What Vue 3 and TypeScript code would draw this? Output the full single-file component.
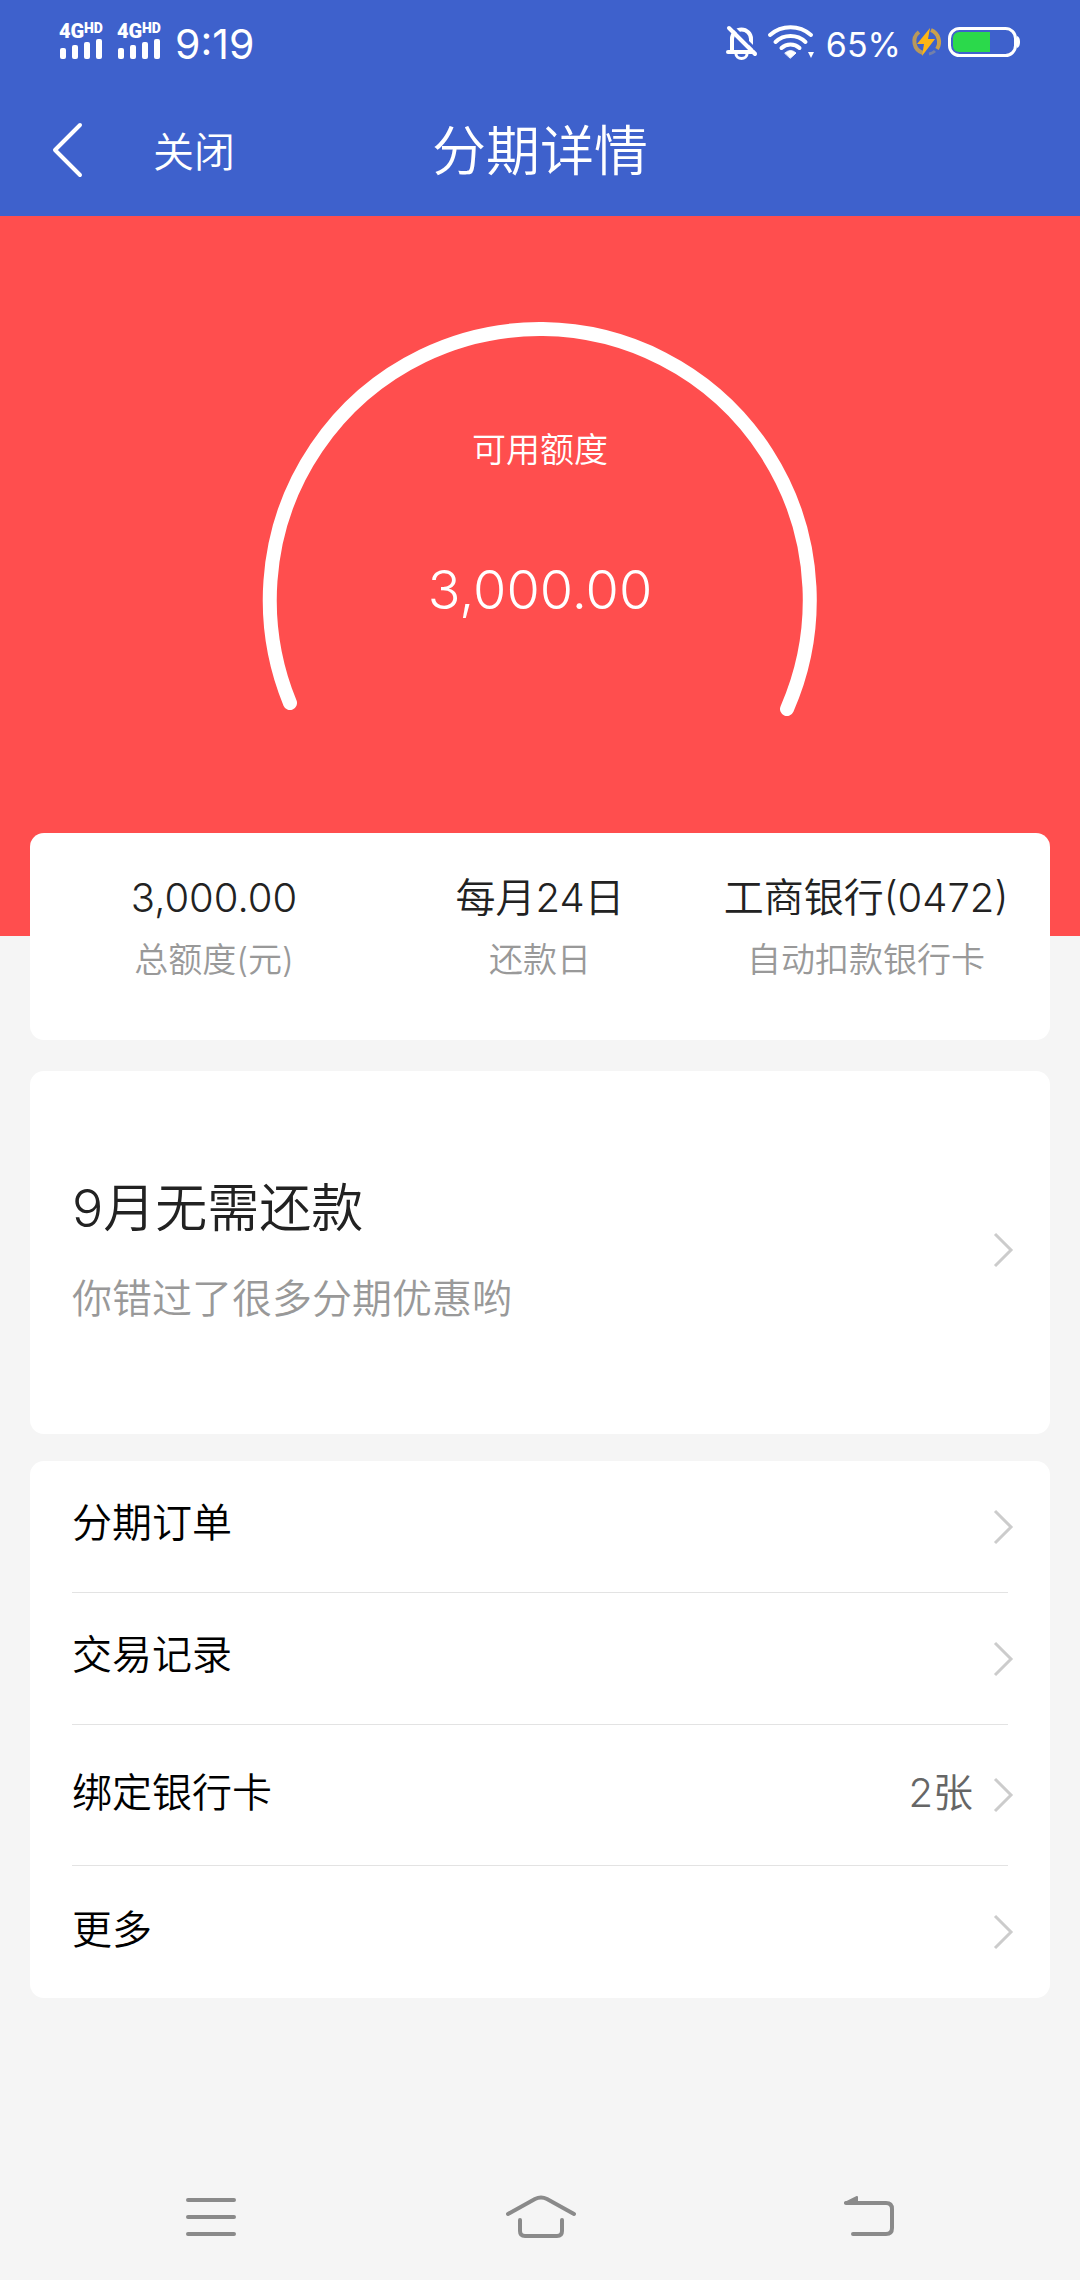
<script setup lang="ts">
interface Stat {
  value: string
  label: string
}

interface MenuRow {
  label: string
  note?: string
}

const signals: number[] = [1, 2]

const stats: Stat[] = [
  { value: '3,000.00', label: '总额度(元)' },
  { value: '每月24日', label: '还款日' },
  { value: '工商银行(0472)', label: '自动扣款银行卡' },
]

const rows: MenuRow[] = [
  { label: '分期订单' },
  { label: '交易记录' },
  { label: '绑定银行卡', note: '2张' },
  { label: '更多' },
]
</script>

<template>
  <div class="page">
    <header class="top">
      <div class="status">
        <div class="status-side">
          <svg v-for="n in signals" :key="n" class="signal" viewBox="0 0 46 38" width="46" height="38">
            <text x="0" y="17" class="net">4G</text>
            <text x="25" y="12" class="hd">HD</text>
            <rect x="1" y="27" width="6" height="11" rx="2" />
            <rect x="13" y="24" width="6" height="14" rx="2" />
            <rect x="25" y="21" width="6" height="17" rx="2" />
            <rect x="37" y="18" width="6" height="20" rx="2" />
          </svg>
          <span class="clock">9:19</span>
        </div>
        <div class="status-side system">
          <svg class="bell" viewBox="0 0 32 36" width="32" height="36" fill="none" stroke="#fff">
            <path d="M6 28V15a9.500 9.500 0 0 1 19 0V28" stroke-width="4" />
            <path d="M2 28H29" stroke-width="4" stroke-linecap="round" />
            <path d="M10 30a5.500 4.500 0 0 0 11 0" stroke-width="3" />
            <path d="M6 2L32 28" stroke="#3e61cc" stroke-width="3" />
            <path d="M3 4L29 30" stroke-width="4" stroke-linecap="round" />
          </svg>
          <svg class="wifi" viewBox="0 0 48 34" width="48" height="34" fill="none" stroke="#fff" stroke-width="4" stroke-linecap="round">
            <path d="M2 10a31 31 0 0 1 41 0" />
            <path d="M7.500 17a22 22 0 0 1 30 0" />
            <path d="M13.500 23a13 13 0 0 1 18 0" />
            <path d="M17 28q5.500 -5 11 0l-5.500 5z" fill="#fff" stroke-width="1" stroke-linejoin="round" />
            <path d="M40 27h6l-3 6z" fill="#fff" stroke="none" />
          </svg>
          <span class="percent">65%</span>
          <svg class="bolt" viewBox="0 0 32 32" width="32" height="32">
            <path d="M8 6A12 12 0 0 0 12 27" fill="none" stroke="#b8985c" stroke-width="4" />
            <path d="M20 4A13 13 0 0 1 26 23" fill="none" stroke="#c9a04c" stroke-width="4" />
            <path d="M24 25A12 12 0 0 1 18 28" fill="none" stroke="#7480a8" stroke-width="3" />
            <path d="M19 2L6 18h7l-2 12L24 13h-7z" fill="#fdb515" />
          </svg>
          <svg class="battery" viewBox="0 0 73 30" width="73" height="30">
            <rect x="1.500" y="1.500" width="66" height="27" rx="10" fill="none" stroke="#fff" stroke-width="3" />
            <path d="M42 5H11a6 6 0 0 0 -6 6v8a6 6 0 0 0 6 6H42z" fill="#2bd94b" />
            <path d="M69 9q3 1 3 6t-3 6z" fill="#fff" />
          </svg>
        </div>
      </div>
      <div class="bar">
        <div class="bar-left">
          <button class="back" type="button" aria-label="返回">
            <svg viewBox="0 0 32 54" width="32" height="54" fill="none" stroke="#fff" stroke-width="4" stroke-linecap="round" stroke-linejoin="round">
              <path d="M29 2L4 27L29 52" />
            </svg>
          </button>
          <button class="close" type="button">关闭</button>
        </div>
        <h1 class="title">分期详情</h1>
      </div>
    </header>

    <section class="hero">
      <div class="gauge">
        <svg class="arc" viewBox="0 0 556 396" width="556" height="396" fill="none" stroke="#fff" stroke-width="14" stroke-linecap="round">
          <path d="M28 381A270 271 0 1 1 525 387" />
        </svg>
        <div class="gauge-text">
          <span class="gauge-label">可用额度</span>
          <span class="gauge-value">3,000.00</span>
        </div>
      </div>
    </section>

    <main class="content">
      <section class="card stats">
        <div v-for="s in stats" :key="s.label" class="stat">
          <span class="stat-value">{{ s.value }}</span>
          <span class="stat-label">{{ s.label }}</span>
        </div>
      </section>

      <a class="card bill" href="#">
        <span class="bill-text">
          <span class="bill-title">9月无需还款</span>
          <span class="bill-note">你错过了很多分期优惠哟</span>
        </span>
        <svg class="chevron" viewBox="0 0 20 34" width="20" height="34"><path d="M2 1L18 17L2 33" /></svg>
      </a>

      <nav class="card menu">
        <a v-for="r in rows" :key="r.label" class="row" :class="{ tall: r.note }" href="#">
          <span class="row-label">{{ r.label }}</span>
          <span v-if="r.note" class="row-note">{{ r.note }}</span>
          <svg class="chevron" viewBox="0 0 20 34" width="20" height="34"><path d="M2 1L18 17L2 33" /></svg>
        </a>
      </nav>
    </main>

    <footer class="keys">
      <button class="key" type="button" aria-label="菜单">
        <svg viewBox="0 0 50 44" width="50" height="44"><path d="M2 5H48M2 22H48M2 39H48" /></svg>
      </button>
      <button class="key" type="button" aria-label="主页">
        <svg viewBox="0 0 70 44" width="70" height="44">
          <path d="M3 19L30 4Q36 1 42 4L69 19" />
          <path d="M15 25V36Q15 41 20 41H52Q57 41 57 36V25" />
        </svg>
      </button>
      <button class="key" type="button" aria-label="返回上一页">
        <svg viewBox="0 0 52 44" width="52" height="44">
          <path d="M3 8H43Q49 8 49 14V33Q49 39 43 39H10" />
          <path d="M2 8L14 2V8z" fill="#8a8a8a" stroke-width="2" />
        </svg>
      </button>
    </footer>
  </div>
</template>

<style>
body {
  margin: 0;
  background: #f5f5f5;
}
</style>

<style scoped>
.page {
  display: flex;
  flex-direction: column;
  min-height: 100vh;
  background: #f5f5f5;
  font-family: Inter, "Noto Sans CJK SC", sans-serif;
  font-weight: 350;
  color: #222;
}

button {
  padding: 0;
  border: 0;
  background: none;
  color: inherit;
  font: inherit;
}

a {
  color: inherit;
  text-decoration: none;
}

svg {
  display: block;
  flex: none;
  overflow: visible;
}

.top {
  background: #3e61cc;
  color: #fff;
}

.status {
  display: flex;
  justify-content: space-between;
  height: 88px;
  padding: 0 59px;
}

.status-side {
  display: flex;
  align-items: center;
  font-weight: 400;
}

.system svg {
  margin-bottom: 4px;
}

.signal {
  margin-right: 12px;
  margin-bottom: 8px;
  fill: #fff;
  font-family: Roboto, sans-serif;
  font-weight: 900;
}

.net {
  font-size: 20px;
}

.hd {
  font-size: 14px;
}

.clock {
  font-size: 41px;
}

.bell {
  margin-right: 10px;
}

.wifi {
  margin-right: 10px;
}

.percent {
  margin-right: 10px;
  font-size: 34px;
}

.bolt {
  margin-right: 5px;
}

.bar {
  display: grid;
  grid-template-columns: 1fr auto 1fr;
  align-items: center;
  height: 128px;
}

.bar-left {
  display: flex;
  align-items: center;
  padding-left: 51px;
}

.back {
  margin-right: 70px;
  padding-bottom: 4px;
}

.close {
  font-size: 41px;
  line-height: 56px;
}

.title {
  margin: 0;
  font-size: 54px;
  font-weight: inherit;
  line-height: 72px;
}

.hero {
  display: flex;
  justify-content: center;
  padding: 106px 0 218px;
  background: #ff4e4e;
  color: #fff;
}

.gauge {
  display: grid;
}

.arc,
.gauge-text {
  grid-area: 1 / 1;
}

.gauge-text {
  display: flex;
  flex-direction: column;
  align-items: center;
  gap: 76px;
  padding-top: 104px;
}

.gauge-label {
  font-size: 34px;
  line-height: 48px;
}

.gauge-value {
  font-size: 54px;
  font-weight: 300;
  line-height: 80px;
}

.content {
  display: flex;
  flex-direction: column;
  margin: -103px 30px 0;
}

.card {
  border-radius: 14px;
  background: #fff;
}

.stats {
  display: grid;
  grid-template-columns: repeat(3, 1fr);
  padding: 37px 21px 52px;
}

.stat {
  display: flex;
  flex-direction: column;
  align-items: center;
  gap: 6px;
  white-space: nowrap;
}

.stat-value {
  font-size: 40px;
  line-height: 56px;
}

.stat-label {
  color: #999;
  font-size: 34px;
  line-height: 56px;
}

.bill {
  display: flex;
  align-items: center;
  justify-content: space-between;
  margin: 31px 0 27px;
  padding: 102px 37px 107px 42px;
}

.bill-text {
  display: flex;
  flex-direction: column;
  gap: 26px;
}

.bill-title {
  font-size: 52px;
  line-height: 72px;
}

.bill-note {
  color: #999;
  font-size: 40px;
  line-height: 56px;
}

.chevron {
  fill: none;
  stroke: #ccc;
  stroke-width: 3;
}

.menu {
  padding: 0 42px;
}

.row {
  display: flex;
  align-items: center;
  height: 131px;
  border-bottom: 1px solid #e3e3e3;
  color: #000;
  font-size: 40px;
  line-height: 56px;
}

.row:last-child {
  border-bottom-color: transparent;
}

.row.tall {
  height: 140px;
}

.row-label,
.row-note {
  padding-bottom: 8px;
}

.row.tall span,
.row:last-child span {
  padding-bottom: 4px;
}

.row-label {
  margin-right: auto;
}

.row-note {
  margin-right: 20px;
  color: #666;
}

.row .chevron {
  margin-right: -5px;
}

.keys {
  display: flex;
  height: 126px;
  margin-top: auto;
  padding: 0 46px;
}

.key {
  display: flex;
  flex: 1;
  align-items: center;
  justify-content: center;
}

.key svg {
  fill: none;
  stroke: #8a8a8a;
  stroke-width: 4;
  stroke-linecap: round;
  stroke-linejoin: round;
}
</style>
